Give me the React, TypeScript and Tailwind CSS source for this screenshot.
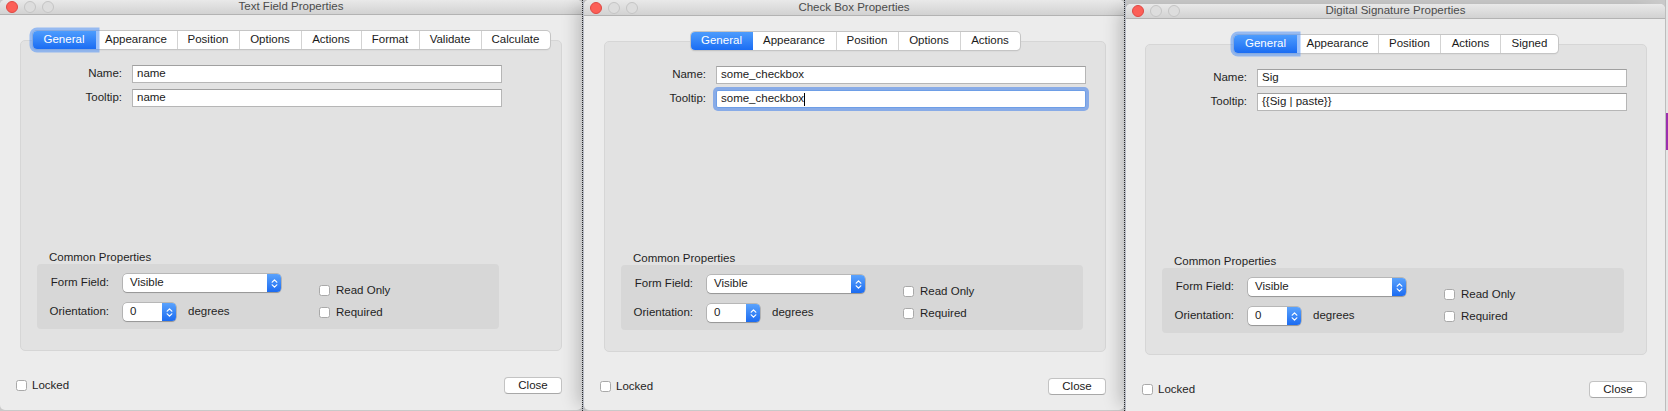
type Tab = { label: string; w: string };

const textTabs: Tab[] = [
  { label: "General", w: "w-[63px]" },
  { label: "Appearance", w: "w-[81px]" },
  { label: "Position", w: "w-[62px]" },
  { label: "Options", w: "w-[62px]" },
  { label: "Actions", w: "w-[60px]" },
  { label: "Format", w: "w-[58px]" },
  { label: "Validate", w: "w-[62px]" },
  { label: "Calculate", w: "w-[69px]" },
];

const checkTabs: Tab[] = [
  { label: "General", w: "w-[62px]" },
  { label: "Appearance", w: "w-[83px]" },
  { label: "Position", w: "w-[62px]" },
  { label: "Options", w: "w-[62px]" },
  { label: "Actions", w: "w-[60px]" },
];

const sigTabs: Tab[] = [
  { label: "General", w: "w-[63px]" },
  { label: "Appearance", w: "w-[81px]" },
  { label: "Position", w: "w-[62px]" },
  { label: "Actions", w: "w-[60px]" },
  { label: "Signed", w: "w-[58px]" },
];

function Lights() {
  return (
    <div className="flex items-center gap-[6px] pl-[6px]">
      <span className="w-[12px] h-[12px] rounded-full bg-[#fc5f57] border border-[#de4843]" />
      <span className="w-[12px] h-[12px] rounded-full bg-[#dddddd] border border-[#c4c4c4]" />
      <span className="w-[12px] h-[12px] rounded-full bg-[#dddddd] border border-[#c4c4c4]" />
    </div>
  );
}

function Chevrons() {
  return (
    <svg width="7" height="11" viewBox="0 0 7 11" fill="none" stroke="white" strokeWidth="1.2" strokeLinecap="round" strokeLinejoin="round">
      <path d="M1.2 4.2 L3.5 1.8 L5.8 4.2" />
      <path d="M1.2 6.8 L3.5 9.2 L5.8 6.8" />
    </svg>
  );
}

function Select({ value, w }: { value: string; w: string }) {
  return (
    <div className={`${w} h-[18px] flex rounded-[4px] bg-white shadow-[0_0_0_0.5px_rgba(0,0,0,0.3),0_1px_1px_rgba(0,0,0,0.18)]`}>
      <div className="flex-1 pl-[7px] flex items-center text-[#1c1c1c]">{value}</div>
      <div className="w-[14px] rounded-r-[4px] bg-linear-to-b from-[#5aa2fc] to-[#1b6bf1] flex items-center justify-center">
        <Chevrons />
      </div>
    </div>
  );
}

function Check({ label }: { label: string }) {
  return (
    <div className="flex items-center h-[11px] gap-[6px]">
      <span className="w-[11px] h-[11px] rounded-[2.5px] bg-white border border-[#a9a9a9]" />
      <span className="leading-[11px] text-[#1f1f1f]">{label}</span>
    </div>
  );
}

function Tabs({ tabs, ringed }: { tabs: Tab[]; ringed: boolean }) {
  return (
    <div className="flex justify-center -mt-[10px]">
      <div className="flex h-[18px] rounded-[4px] bg-white shadow-[0_0_0_1px_#c5c5c5,0_1px_1.5px_rgba(0,0,0,0.15)]">
        {tabs.map((t, i) =>
          i === 0 ? (
            <div
              key={t.label}
              className={`${t.w} relative z-10 flex items-center justify-center rounded-l-[4px] bg-linear-to-b from-[#4d9cfd] to-[#1a6cf3] text-white ${
                ringed ? "shadow-[0_0_0_3.5px_rgba(80,145,245,0.55)]" : ""
              }`}
            >
              {t.label}
            </div>
          ) : (
            <div
              key={t.label}
              className={`${t.w} flex items-center justify-center text-[#1a1a1a] ${i > 1 ? "border-l border-[#d3d3d3]" : ""}`}
            >
              {t.label}
            </div>
          )
        )}
      </div>
    </div>
  );
}

function Field({ label, value, focused }: { label: string; value: string; focused?: boolean }) {
  return (
    <div className="flex items-center h-[18px]">
      <div className="w-[101px] text-right text-[#1f1f1f]">{label}</div>
      <div
        className={`ml-[10px] w-[370px] h-[18px] bg-white px-[4px] flex items-center text-[#1a1a1a] ${
          focused
            ? "border border-[#6e9ee6] rounded-[2px] shadow-[0_0_0_3px_rgba(105,152,232,0.75)]"
            : "border border-[#b6b6b6] border-t-[#a0a0a0]"
        }`}
      >
        {value}
        {focused && <span className="w-px h-[13px] bg-black" />}
      </div>
    </div>
  );
}

type DialogProps = {
  title: string;
  tabs: Tab[];
  ringed: boolean;
  name: string;
  tooltip: string;
  focused?: boolean;
  outer: string;
  bar: string;
  box: string;
  row: string;
};

function Dialog({ title, tabs, ringed, name, tooltip, focused, outer, bar, box, row }: DialogProps) {
  return (
    <div className={`${outer} shrink-0 flex flex-col bg-[#ececec] rounded-[5px] overflow-hidden`}>
      <div className={`${bar} shrink-0 grid grid-cols-[1fr_auto_1fr] items-center bg-linear-to-b from-[#e9e9e9] to-[#d2d2d2] border-b border-[#b3b3b3]`}>
        <Lights />
        <div className="text-[#4b4b4b] leading-none">{title}</div>
        <div />
      </div>

      <div className={`${box} mt-[25px] h-[311px] shrink-0 rounded-[5px] bg-[#e2e2e2] border border-[#d6d6d6] flex flex-col`}>
        <Tabs tabs={tabs} ringed={ringed} />
        <div className="mt-[16px]">
          <Field label="Name:" value={name} />
        </div>
        <div className="mt-[6px]">
          <Field label="Tooltip:" value={tooltip} focused={focused} />
        </div>

        <div className="mt-auto mb-[21px] ml-[16px]">
          <div className="h-[14px] leading-[14px] pl-[12px] text-[#1f1f1f]">Common Properties</div>
          <div className="w-[462px] h-[65px] rounded-[4px] bg-[#d7d7d7] flex">
            <div className="pt-[10px] flex flex-col gap-[11px]">
              <div className="flex items-center">
                <div className="w-[72px] text-right text-[#1f1f1f]">Form Field:</div>
                <div className="ml-[14px]">
                  <Select value="Visible" w="w-[158px]" />
                </div>
              </div>
              <div className="flex items-center">
                <div className="w-[72px] text-right text-[#1f1f1f]">Orientation:</div>
                <div className="ml-[14px]">
                  <Select value="0" w="w-[53px]" />
                </div>
                <div className="ml-[12px] text-[#1f1f1f]">degrees</div>
              </div>
            </div>
            <div className="ml-[38px] pt-[21px] flex flex-col gap-[11px]">
              <Check label="Read Only" />
              <Check label="Required" />
            </div>
          </div>
        </div>
      </div>

      <div className={`${row} ml-[16px] mt-[26px] h-[17px] flex items-center justify-between`}>
        <div className="flex items-center gap-[5px]">
          <span className="w-[11px] h-[11px] rounded-[2.5px] bg-white border border-[#a9a9a9]" />
          <span className="text-[#1f1f1f]">Locked</span>
        </div>
        <div className="w-[58px] h-[17px] rounded-[4px] bg-white border border-[#c3c3c3] border-b-[#a8a8a8] flex items-center justify-center text-[#1a1a1a]">
          Close
        </div>
      </div>
    </div>
  );
}

export default function App() {
  return (
    <div className="w-[1668px] h-[411px] overflow-hidden flex bg-[#c9c9c9] font-['Liberation_Sans',Arial,sans-serif] text-[11.5px]">
      <Dialog
        title="Text Field Properties"
        tabs={textTabs}
        ringed
        name="name"
        tooltip="name"
        outer="w-[582px] h-[410px]"
        bar="h-[15px]"
        box="ml-[20px] w-[542px]"
        row="w-[546px]"
      />
      <div className="relative z-[3] w-[2px] h-[411px] shrink-0 bg-[#b7bbc4] border-l border-dotted border-[#2a2a2a]" />
      <div className="relative z-[2] shrink-0 shadow-[-12px_0_16px_-6px_rgba(0,0,0,0.22)] rounded-[5px]">
        <Dialog
          title="Check Box Properties"
          tabs={checkTabs}
          ringed={false}
          name="some_checkbox"
          tooltip="some_checkbox"
          focused
          outer="w-[540px] h-[410px]"
          bar="h-[16px]"
          box="ml-[20px] w-[502px]"
          row="w-[506px]"
        />
      </div>
      <div className="relative z-[5] w-[2px] h-[411px] shrink-0 bg-[#b7bbc4] border-l border-dotted border-[#2a2a2a]" />
      <div className="relative z-[4] shrink-0 mt-[4px] shadow-[-12px_0_16px_-6px_rgba(0,0,0,0.22)] rounded-[5px]">
        <Dialog
          title="Digital Signature Properties"
          tabs={sigTabs}
          ringed
          name="Sig"
          tooltip="{{Sig | paste}}"
          outer="w-[539px] h-[420px]"
          bar="h-[15px]"
          box="ml-[19px] w-[502px]"
          row="w-[505px]"
        />
      </div>
      <div className="w-[3px] h-[411px] shrink-0 flex flex-col bg-[#e6e6e6] border-l border-[#bdbdbd]">
        <div className="h-[113px]" />
        <div className="h-[37px] w-[2px] bg-[#9b2fae]" />
      </div>
    </div>
  );
}
